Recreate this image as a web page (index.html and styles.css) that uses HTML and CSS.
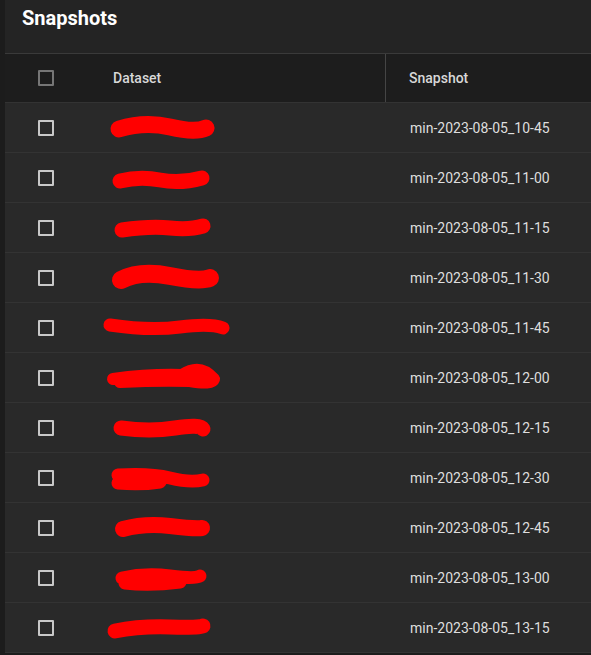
FILE: index.html
```html
<!DOCTYPE html>
<html lang="en">
<head>
    <meta charset="UTF-8">
    <meta name="viewport" content="width=device-width, initial-scale=1.0">
    <title>Snapshots</title>
    <link rel="stylesheet" href="styles.css">
</head>
<body>
    <div class="panel">
        <div class="panel-title">Snapshots</div>
        <div class="table">
            <div class="row head">
                <div class="cell check"><span class="box"></span></div>
                <div class="cell dataset">Dataset</div>
                <div class="cell snapshot">Snapshot</div>
            </div>
            <div class="row">
                <div class="cell check"><span class="box"></span></div>
                <div class="cell dataset"><svg class="redact" viewBox="0 0 130 30"><path d="M 19 16 Q 45 8 70 14 T 106 15" stroke-width="17"/></svg></div>
                <div class="cell snapshot">min-2023-08-05_10-45</div>
            </div>
            <div class="row">
                <div class="cell check"><span class="box"></span></div>
                <div class="cell dataset"><svg class="redact" viewBox="0 0 130 30"><path d="M 20 18 Q 40 13 60 17 T 102 15" stroke-width="15"/></svg></div>
                <div class="cell snapshot">min-2023-08-05_11-00</div>
            </div>
            <div class="row">
                <div class="cell check"><span class="box"></span></div>
                <div class="cell dataset"><svg class="redact" viewBox="0 0 130 30"><path d="M 22 17 Q 50 13 70 15 T 103 13" stroke-width="15"/></svg></div>
                <div class="cell snapshot">min-2023-08-05_11-15</div>
            </div>
            <div class="row">
                <div class="cell check"><span class="box"></span></div>
                <div class="cell dataset"><svg class="redact" viewBox="0 0 130 30"><path d="M 21 17 Q 40 7 70 13 T 110 15" stroke-width="18"/></svg></div>
                <div class="cell snapshot">min-2023-08-05_11-30</div>
            </div>
            <div class="row">
                <div class="cell check"><span class="box"></span></div>
                <div class="cell dataset"><svg class="redact" viewBox="0 0 130 30"><path d="M 10 12 Q 50 18 80 14 T 123 15" stroke-width="13"/></svg></div>
                <div class="cell snapshot">min-2023-08-05_11-45</div>
            </div>
            <div class="row">
                <div class="cell check"><span class="box"></span></div>
                <div class="cell dataset"><svg class="redact" viewBox="0 0 130 30"><path d="M 13 16 Q 50 11 82 12 Q 100 0 114 16 Q 112 22 90 18 Q 60 17 20 19" stroke-width="12"/></svg></div>
                <div class="cell snapshot">min-2023-08-05_12-00</div>
            </div>
            <div class="row">
                <div class="cell check"><span class="box"></span></div>
                <div class="cell dataset"><svg class="redact" viewBox="0 0 130 30"><path d="M 21 15 Q 50 19 75 15 T 103 16" stroke-width="15"/></svg></div>
                <div class="cell snapshot">min-2023-08-05_12-15</div>
            </div>
            <div class="row">
                <div class="cell check"><span class="box"></span></div>
                <div class="cell dataset"><svg class="redact" viewBox="0 0 130 30"><path d="M 18 12 Q 50 10 70 15 Q 90 20 103 17 M 18 20 Q 40 22 60 19" stroke-width="13"/></svg></div>
                <div class="cell snapshot">min-2023-08-05_12-30</div>
            </div>
            <div class="row">
                <div class="cell check"><span class="box"></span></div>
                <div class="cell dataset"><svg class="redact" viewBox="0 0 130 30"><path d="M 23 16 Q 45 10 70 13 T 102 15" stroke-width="16"/></svg></div>
                <div class="cell snapshot">min-2023-08-05_12-45</div>
            </div>
            <div class="row">
                <div class="cell check"><span class="box"></span></div>
                <div class="cell dataset"><svg class="redact" viewBox="0 0 130 30"><path d="M 22 15 Q 45 10 70 13 T 100 13 M 25 20 Q 50 23 80 19" stroke-width="13"/></svg></div>
                <div class="cell snapshot">min-2023-08-05_13-00</div>
            </div>
            <div class="row">
                <div class="cell check"><span class="box"></span></div>
                <div class="cell dataset"><svg class="redact" viewBox="0 0 130 30"><path d="M 15 18 Q 40 13 70 14 T 103 13" stroke-width="15"/></svg></div>
                <div class="cell snapshot">min-2023-08-05_13-15</div>
            </div>
        </div>
    </div>
</body>
</html>
```

FILE: styles.css
```css
html, body {
    margin: 0;
    background-color: #1c1c1c;
    font-family: Roboto, "Liberation Sans", sans-serif;
}
.panel {
    margin-left: 5px;
    background-color: #282828;
}
.panel-title {
    height: 54px;
    box-sizing: border-box;
    padding: 4px 0 0 17px;
    background-color: #242424;
    border-bottom: 1px solid #3a3a3a;
    color: #fff;
    font-size: 20px;
    font-weight: 700;
    line-height: 28px;
}
.row {
    display: flex;
    height: 50px;
    box-sizing: border-box;
    border-bottom: 1px solid #333;
    background-color: #292929;
    color: #dedede;
    font-size: 14px;
}
.row.head {
    height: 49px;
    background-color: #1d1d1d;
    font-size: 14px;
    font-weight: 500;
    color: #d8d8d8;
}
.cell {
    display: flex;
    align-items: center;
}
.check {
    width: 88px;
    padding-left: 33px;
    box-sizing: border-box;
}
.box {
    width: 16px;
    height: 16px;
    box-sizing: border-box;
    border: 2px solid #c8c8c8;
    border-radius: 1px;
}
.head .box {
    border-color: #767676;
}
.dataset {
    width: 292px;
    padding-left: 20px;
    box-sizing: border-box;
}
.dataset .redact {
    width: 130px;
    height: 30px;
    margin-left: -13px;
    overflow: visible;
}
.redact path {
    fill: none;
    stroke: #ff0000;
    stroke-linecap: round;
    stroke-linejoin: round;
}
.snapshot {
    flex: 1;
    padding-left: 25px;
}
.head .snapshot {
    border-left: 1px solid #454545;
    padding-left: 23px;
}
```
